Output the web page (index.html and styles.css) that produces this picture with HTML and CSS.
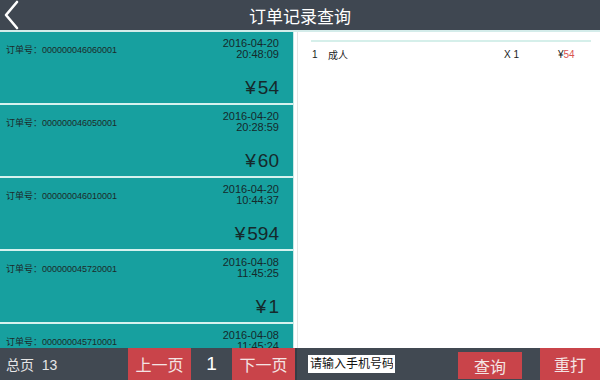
FILE: index.html
```html
<!DOCTYPE html>
<html lang="zh-CN">
<head>
    <meta charset="UTF-8">
    <meta name="viewport" content="width=device-width, initial-scale=1.0">
    <title>订单记录查询</title>
    <link rel="stylesheet" href="styles.css">
</head>
<body>

<div class="app">
    <div class="header">
        <a class="back" href="#">
            <svg width="20" height="30" viewBox="0 0 20 30"><polyline points="16,2 5,15 16,28" fill="none" stroke="#fff" stroke-width="2.6" stroke-linecap="round" stroke-linejoin="round"/></svg>
        </a>
        <h1>订单记录查询</h1>
    </div>

    <div class="main">
        <div class="order-list">
            <div class="order">
                <div class="order-top">
                    <span class="order-no">订单号：000000046060001</span>
                    <span class="order-time">2016-04-20<br>20:48:09</span>
                </div>
                <div class="order-price"><span class="yen">¥</span>54</div>
            </div>
            <div class="order">
                <div class="order-top">
                    <span class="order-no">订单号：000000046050001</span>
                    <span class="order-time">2016-04-20<br>20:28:59</span>
                </div>
                <div class="order-price"><span class="yen">¥</span>60</div>
            </div>
            <div class="order">
                <div class="order-top">
                    <span class="order-no">订单号：000000046010001</span>
                    <span class="order-time">2016-04-20<br>10:44:37</span>
                </div>
                <div class="order-price"><span class="yen">¥</span>594</div>
            </div>
            <div class="order">
                <div class="order-top">
                    <span class="order-no">订单号：000000045720001</span>
                    <span class="order-time">2016-04-08<br>11:45:25</span>
                </div>
                <div class="order-price"><span class="yen">¥</span>1</div>
            </div>
            <div class="order">
                <div class="order-top">
                    <span class="order-no">订单号：000000045710001</span>
                    <span class="order-time">2016-04-08<br>11:45:24</span>
                </div>
            </div>
        </div>

        <div class="detail">
            <div class="detail-row">
                <span class="d-idx">1</span>
                <span class="d-name">成人</span>
                <span class="d-qty">X 1</span>
                <span class="d-price">¥<em>54</em></span>
            </div>
        </div>
    </div>

    <div class="footer">
        <div class="pager">
            <span class="total">总页&nbsp;&nbsp;13</span>
            <button class="btn btn-prev">上一页</button>
            <span class="page-num">1</span>
            <button class="btn btn-next">下一页</button>
        </div>
        <div class="search">
            <input type="text" class="phone" placeholder="请输入手机号码">
            <button class="btn btn-query">查询</button>
            <button class="btn btn-reprint">重打</button>
        </div>
    </div>
</div>

</body>
</html>
```

FILE: styles.css
```css
body {
    margin: 0;
    font-family: "Liberation Sans", "Noto Sans CJK SC", sans-serif;
    background-color: #fff;
}
.app {
    width: 600px;
    height: 380px;
    display: flex;
    flex-direction: column;
    overflow: hidden;
}
.header {
    height: 30px;
    background-color: #3f4751;
    border-bottom: 2px solid #d4ecea;
    display: flex;
    align-items: center;
    justify-content: center;
    position: relative;
}
.header h1 {
    margin: 0;
    font-size: 17px;
    font-weight: normal;
    color: #fff;
}
.back {
    position: absolute;
    left: 1px;
    top: 0;
    display: flex;
}
.main {
    height: 316px;
    display: flex;
}
.order-list {
    width: 293px;
    border-right: 1px solid #cbe9e6;
    background-color: #17a09f;
    overflow: hidden;
}
.order {
    height: 71px;
    border-bottom: 2px solid #d6f2ef;
    padding: 0 14px 0 6px;
    display: flex;
    flex-direction: column;
    justify-content: space-between;
    box-sizing: content-box;
}
.order-top {
    display: flex;
    justify-content: space-between;
    align-items: flex-start;
    padding-top: 6px;
}
.order-no {
    font-size: 9px;
    color: #1d2a2a;
    margin-top: 5px;
}
.order-time {
    font-size: 11px;
    line-height: 11px;
    color: #15292b;
    text-align: right;
}
.order-price {
    text-align: right;
    font-size: 19px;
    color: #15292b;
    padding-bottom: 4px;
}
.yen {
    margin-right: 2px;
}
.detail {
    flex: 1;
    margin-left: 3px;
    border-left: 1px solid #e4e4e4;
    padding: 8px 9px 0 13px;
}
.detail-row {
    border-top: 2px solid #d5efea;
    display: flex;
    align-items: center;
    height: 25px;
    font-size: 10px;
    color: #222;
}
.d-idx {
    width: 16px;
    padding-left: 1px;
}
.d-name {
    flex: 1;
}
.d-qty {
    width: 54px;
}
.d-price {
    width: 33px;
}
.d-price em {
    font-style: normal;
    color: #d9534f;
}
.footer {
    height: 32px;
    background-color: #414952;
    display: flex;
    align-items: stretch;
}
.pager {
    width: 295px;
    display: flex;
    align-items: stretch;
    border-right: 2px solid #353c44;
}
.total {
    width: 122px;
    padding-left: 6px;
    display: flex;
    align-items: center;
    font-size: 14px;
    color: #e6e6e6;
}
.btn {
    border: none;
    background-color: #c9444a;
    color: #f4e4e4;
    font-family: inherit;
    font-size: 16px;
    padding: 0;
    cursor: pointer;
}
.btn-prev, .btn-next {
    width: 63px;
}
.page-num {
    width: 41px;
    display: flex;
    align-items: center;
    justify-content: center;
    font-size: 19px;
    color: #fff;
}
.search {
    flex: 1;
    display: flex;
    align-items: center;
    padding-left: 11px;
}
.phone {
    width: 87px;
    height: 18px;
    border: none;
    padding: 0 2px;
    box-sizing: border-box;
    font-family: inherit;
    font-size: 12px;
}
.phone::placeholder {
    color: #111;
}
.btn-query {
    width: 64px;
    height: 27px;
    margin-left: 63px;
    margin-top: 3px;
}
.btn-reprint {
    width: 60px;
    height: 32px;
    margin-left: auto;
}
```
